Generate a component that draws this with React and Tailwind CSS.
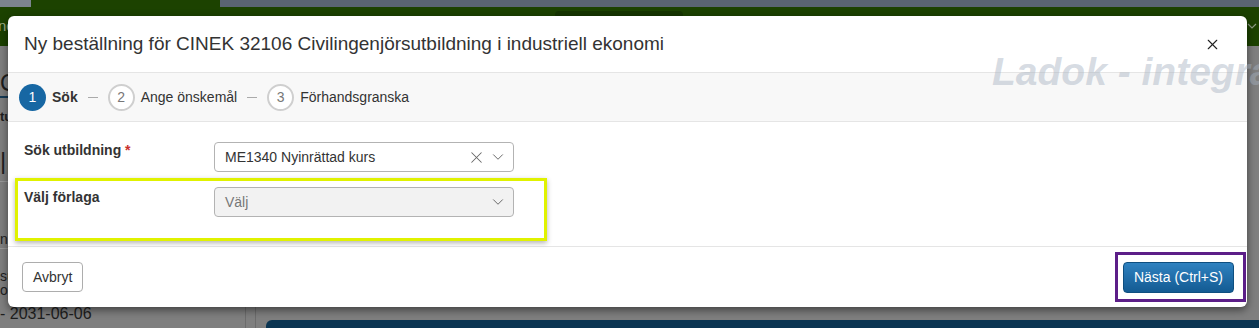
import { X, ChevronDown } from "lucide-react";

const font = "font-['Liberation_Sans',Arial,sans-serif]";

const Step = ({ n, label, active }) => (
  <div className="flex items-center gap-[6px]">
    <div
      className={
        active
          ? "flex h-[27px] w-[27px] items-center justify-center rounded-full bg-[#1767a3] text-[14px] text-white"
          : "flex h-[27px] w-[27px] items-center justify-center rounded-full border-2 border-[#cfcfcf] bg-white text-[14px] text-[#777]"
      }>
      {n}
    </div>
    <span className={active ? "text-[14px] font-bold text-[#333]" : "text-[14px] text-[#333]"}>{label}</span>
  </div>
);

const Dash = () => <div className="mx-[10px] h-[1px] w-[10px] bg-[#aaa]" />;

export default function App() {
  return (
    <div className={`relative h-[328px] w-[1259px] overflow-hidden bg-[#7f7f7f] ${font}`}>
      {/* page behind the dimmed backdrop */}
      <div className="flex h-[7px]">
        <div className="w-[31px] bg-[#7c848f]" />
        <div className="w-[189px] bg-[#1c4200]" />
        <div className="flex-1 bg-[#5a6472]" />
      </div>
      <div className="relative flex h-[39px] items-center justify-between bg-[#1c4200]">
        <span className="-ml-[2px] text-[15px] text-[#9db08c]">ne</span>
        <div className="absolute left-[555px] top-[4px] h-[12px] w-[128px] rounded-[4px] bg-[#163500]" />
        <svg width="10" height="6" viewBox="0 0 10 6" className="mr-[2px] mb-[2px]">
          <path d="M1 1l4 4 4-4" fill="none" stroke="#8c9a84" strokeWidth="1.2" />
        </svg>
      </div>
      <div className="flex h-[282px]">
        <div className="w-[246px] border-r border-[#6c6c6c] text-[#1e1e1e]">
          <div className="h-[52px] border-b-2 border-[#163a55] pt-[26px] text-[24px] leading-[22px]">Omfattning</div>
          <div className="pt-[11px] text-[13px] font-bold leading-[16px]">tudieplan</div>
          <div className="h-[57px] border-b border-[#999] pt-[23px] text-[24px] leading-[26px]">||</div>
          <div className="h-[67px] border-b border-[#999] pt-[49px] text-[14px] leading-[16px]">nivå</div>
          <div className="pt-[20px] text-[14px] leading-[14px]">
            <div>summa</div>
            <div>o.</div>
            <div className="mt-[10px] text-[16px]">- 2031-06-06</div>
          </div>
        </div>
        <div className="ml-[9px] w-[1px] bg-[#6c6c6c]" />
        <div className="flex-1 pl-[10px] pt-[274px]">
          <div className="h-[20px] rounded-tl-[6px] bg-[#0b3552]" />
        </div>
      </div>

      {/* modal */}
      <div className="absolute left-[8px] top-[16px] flex h-[291px] w-[1239px] flex-col overflow-hidden rounded-[6px] bg-white shadow-[0_3px_9px_rgba(0,0,0,0.5)]">
        <div className="flex h-[57px] items-center justify-between border-b border-[#e5e5e5] pl-[16px] pr-[26px]">
          <h4 className="text-[19px] text-[#333]">
            Ny beställning för CINEK 32106 Civilingenjörsutbildning i industriell ekonomi
          </h4>
          <X size={17} strokeWidth={1.6} className="text-[#222]" />
        </div>
        <div className="flex h-[49px] items-center border-b border-[#e5e5e5] bg-[#f8f8f8] pl-[11px]">
          <Step n="1" label="Sök" active />
          <Dash />
          <Step n="2" label="Ange önskemål" />
          <Dash />
          <Step n="3" label="Förhandsgranska" />
        </div>
        <div className="flex h-[125px] flex-col gap-[15px] border-b border-[#e5e5e5] pl-[16px] pt-[18px]">
          <div className="flex items-start">
            <label className="w-[190px] text-[14px] font-bold leading-[20px] text-[#333]">
              Sök utbildning <span className="text-[#c9302c]">*</span>
            </label>
            <div className="mt-[2px] flex h-[30px] w-[300px] items-center justify-between rounded-[4px] border border-[#b3b3b3] bg-white pl-[10px] pr-[6px] text-[14px] text-[#333]">
              <span>ME1340 Nyinrättad kurs</span>
              <div className="flex items-center gap-[3px] text-[#666]">
                <X size={19} strokeWidth={1.3} />
                <ChevronDown size={18} strokeWidth={1.3} />
              </div>
            </div>
          </div>
          <div className="flex items-start">
            <label className="w-[190px] text-[14px] font-bold leading-[20px] text-[#333]">Välj förlaga</label>
            <div className="flex h-[30px] w-[300px] items-center justify-between rounded-[4px] border border-[#b3b3b3] bg-[#f2f2f2] pl-[10px] pr-[6px] text-[14px] text-[#777]">
              <span>Välj</span>
              <ChevronDown size={18} strokeWidth={1.3} className="text-[#666]" />
            </div>
          </div>
        </div>
        <div className="flex flex-1 items-center justify-between pl-[14px] pr-[13px]">
          <button className="h-[30px] rounded-[4px] border border-[#adadad] bg-white px-[10px] text-[14px] text-[#333]">
            Avbryt
          </button>
          <button className="h-[31px] rounded-[4px] border border-[#0e4f80] bg-gradient-to-b from-[#2f82c0] to-[#135b93] px-[10px] text-[14px] text-white">
            Nästa (Ctrl+S)
          </button>
        </div>
      </div>

      {/* watermark */}
      <div className="pointer-events-none absolute left-[992px] top-[52px] whitespace-nowrap text-[39px] font-bold italic leading-[39px] text-[rgba(165,177,192,0.45)]">
        Ladok - integration
      </div>

      {/* annotation boxes */}
      <div className="absolute left-[15px] top-[178px] h-[63px] w-[532px] border-[3px] border-[#e0f200] shadow-[0_2px_5px_rgba(0,0,0,0.3)]" />
      <div className="absolute left-[1115px] top-[252px] h-[50px] w-[131px] border-[3px] border-[#5c1e88]" />
    </div>
  );
}
